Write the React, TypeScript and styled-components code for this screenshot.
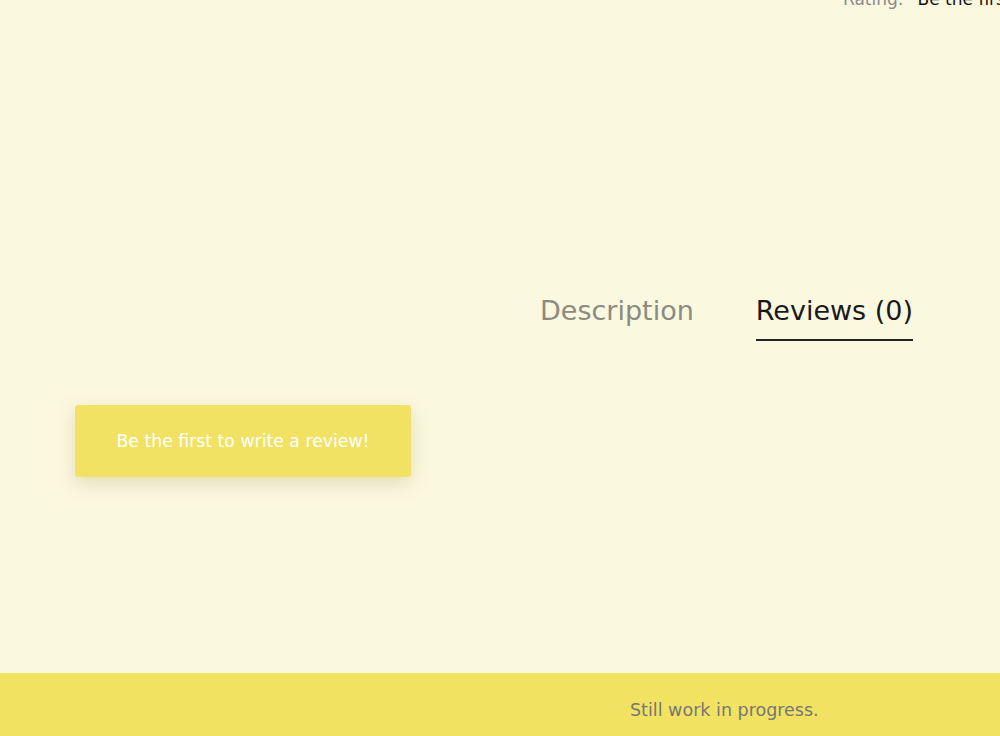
import styled, { createGlobalStyle } from 'styled-components';

const GlobalStyle = createGlobalStyle`
    html, body {
        margin: 0;
        padding: 0;
        background: #fbf8e0;
        font-family: 'DejaVu Sans', 'Open Sans', sans-serif;
    }
`;

const Page = styled.div`
    height: 736px;
    display: flex;
    flex-direction: column;
    overflow: hidden;
    background: #fbf8e0;
`;

const Main = styled.main`
    flex: 1;
    display: flex;
    flex-direction: column;
`;

const RatingRow = styled.div`
    display: flex;
    gap: 14px;
    margin-top: -13px;
    padding-left: 843px;
    white-space: nowrap;
    font-size: 17px;
    line-height: 24px;
`;

const RatingLabel = styled.span`
    color: #8a8a8a;
`;

const RatingValue = styled.span`
    color: #111;
`;

const Tabs = styled.nav`
    display: flex;
    gap: 62px;
    margin: 282px 0 0 540px;
`;

const Tab = styled.button<{ $active?: boolean }>`
    background: none;
    border: none;
    padding: 0 0 10px;
    font-family: inherit;
    font-size: 27px;
    line-height: 36px;
    color: ${(p) => (p.$active ? '#1a1a1a' : '#8b8b80')};
    border-bottom: 2px solid ${(p) => (p.$active ? '#222' : 'transparent')};
    cursor: pointer;
`;

const ReviewArea = styled.section`
    padding: 64px 0 0 75px;
`;

const WriteButton = styled.button`
    width: 336px;
    height: 72px;
    background: #f2e264;
    color: #fff;
    border: none;
    border-radius: 3px;
    box-shadow: 0 6px 18px rgba(150, 140, 60, 0.25);
    font-family: inherit;
    font-size: 17.3px;
    cursor: pointer;
`;

const Footer = styled.footer`
    height: 63px;
    box-sizing: border-box;
    padding: 10px 0 0 630px;
    background: #f1e262;
    display: flex;
    align-items: center;
    color: #777;
    font-size: 17.5px;
`;

function App() {
    return (
        <Page>
            <GlobalStyle />
            <Main>
                <RatingRow>
                    <RatingLabel>Rating:</RatingLabel>
                    <RatingValue>Be the first to review</RatingValue>
                </RatingRow>
                <Tabs>
                    <Tab>Description</Tab>
                    <Tab $active>Reviews (0)</Tab>
                </Tabs>
                <ReviewArea>
                    <WriteButton>Be the first to write a review!</WriteButton>
                </ReviewArea>
            </Main>
            <Footer>Still work in progress.</Footer>
        </Page>
    );
}

export default App;
